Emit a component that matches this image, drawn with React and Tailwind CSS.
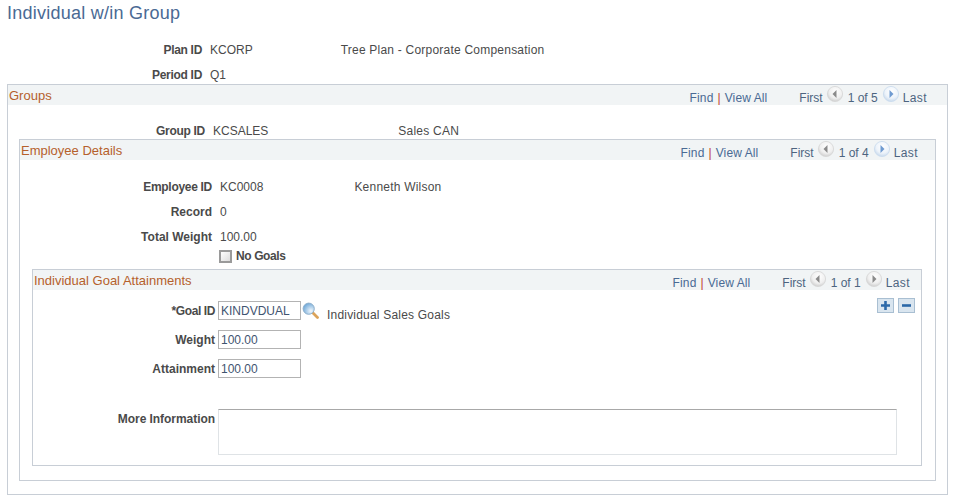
import React from "react";

function Arrow({ dir, active, uid }) {
  const id = `${uid}${dir}`;
  const fill = active ? "#6f9bd1" : "#8a8a8a";
  return (
    <svg width="18" height="18" viewBox="0 0 18 18" className="block shrink-0">
      <defs>
        <radialGradient id={id} cx="55%" cy="35%" r="65%">
          <stop offset="0%" stopColor="#ffffff" />
          <stop offset="65%" stopColor={active ? "#edf3fa" : "#efefef"} />
          <stop offset="100%" stopColor={active ? "#c8d9ec" : "#cfcfcf"} />
        </radialGradient>
      </defs>
      <circle cx="9" cy="9" r="7.6" fill={`url(#${id})`} stroke={active ? "#c9dbee" : "#d6d6d6"} strokeWidth="0.8" />
      {dir === "l" ? (
        <path d="M6.5 9 L10.5 5 V13 Z" fill={fill} />
      ) : (
        <path d="M11.5 9 L7.5 5 V13 Z" fill={fill} />
      )}
    </svg>
  );
}

function Header({ title, count, nextActive, pr, uid }) {
  return (
    <div className="flex h-5 items-center bg-[#f1f4f5] pl-[1px]">
      <span className="text-[13px] leading-none text-[#b5602c]">{title}</span>
      <div className={`ml-auto mt-[6px] flex items-center text-[12px] ${pr}`}>
        <span className="tracking-[0.2px] text-[#4a6a94]">Find</span>
        <span className="mx-[4px] text-[#c0392b]">|</span>
        <span className="tracking-[0.1px] text-[#4a6a94]">View All</span>
        <span className="ml-[32px] text-[#4d6480]">First</span>
        <span className="ml-[3px] -mt-[9px]"><Arrow uid={uid} dir="l" /></span>
        <span className="ml-[4px] text-[#4d6480]">{count}</span>
        <span className="ml-[4px] -mt-[9px]"><Arrow uid={uid} dir="r" active={nextActive} /></span>
        <span className="ml-[3px] tracking-[0.4px] text-[#4d6480]">Last</span>
      </div>
    </div>
  );
}

function Row({ label, value, w, note, noteClass, tight, className = "" }) {
  return (
    <div className={`flex h-[14px] items-center ${className}`}>
      <span className={`${w} text-right font-bold text-[#4a4a4a] ${tight ? "tracking-[-0.3px]" : ""}`}>{label}</span>
      <span className="ml-[8px] text-[#4a4a4a]">{value}</span>
      {note && <span className={`tracking-[0.22px] text-[#4a4a4a] ${noteClass}`}>{note}</span>}
    </div>
  );
}

function Field({ label, value, tight, className = "", children }) {
  return (
    <div className={`flex h-[19px] items-center ${className}`}>
      <span className={`w-[182px] text-right font-bold text-[#4a4a4a] ${tight ? "tracking-[-0.4px]" : ""}`}>{label}</span>
      <div className="ml-[3px] flex h-[19px] w-[83px] items-center border border-[#b3b3b3] bg-white pl-[2px] text-[#3f5470]">
        {value}
      </div>
      {children}
    </div>
  );
}

function Magnifier() {
  return (
    <svg width="17" height="17" viewBox="0 0 17 17" className="ml-[1px] block shrink-0">
      <defs>
        <radialGradient id="lens" cx="70%" cy="70%" r="75%">
          <stop offset="0%" stopColor="#f2f8fd" />
          <stop offset="100%" stopColor="#6fa8d8" />
        </radialGradient>
      </defs>
      <path d="M11 11 L15.5 15.5" stroke="#dba35a" strokeWidth="2.8" strokeLinecap="round" />
      <circle cx="6.7" cy="6.7" r="5.6" fill="url(#lens)" stroke="#8fb0cc" strokeWidth="1" />
    </svg>
  );
}

function SquareBtn({ children }) {
  return (
    <span className="flex h-[15px] w-[17px] items-center justify-center border border-[#a9bfd2] bg-[#d9e5ef]">
      {children}
    </span>
  );
}

export default function App() {
  return (
    <div
      className="h-[499px] w-[954px] overflow-hidden bg-white text-[12px] leading-[14px]"
      style={{ fontFamily: '"Liberation Sans", Arial, sans-serif' }}
    >
      <h1 className="ml-[7px] mt-[2px] h-[22px] text-[18px] leading-[22px] tracking-[0.25px] text-[#4a6a94]">Individual w/in Group</h1>

      <Row className="mt-[19px]" w="w-[202px]" tight label="Plan ID" value="KCORP" note="Tree Plan - Corporate Compensation" noteClass="ml-[88px]" />
      <Row className="mt-[11px]" w="w-[202px]" tight label="Period ID" value="Q1" />

      <div className="ml-[7px] mt-[2px] h-[411px] w-[941px] border border-[#c8ced6]">
        <Header uid="a" title="Groups" count="1 of 5" nextActive pr="pr-[20px]" />
        <Row className="mt-[19px]" w="w-[197px]" tight label="Group ID" value="KCSALES" note="Sales CAN" noteClass="ml-[130px]" />

        <div className="ml-[11px] mt-[1px] h-[342px] w-[917px] border border-[#c8ced6]">
          <Header uid="b" title="Employee Details" count="1 of 4" nextActive pr="pr-[17px]" />
          <Row className="mt-[20px]" w="w-[192px]" tight label="Employee ID" value="KC0008" note="Kenneth Wilson" noteClass="ml-[91px]" />
          <Row className="mt-[11px]" w="w-[192px]" label="Record" value="0" />
          <Row className="mt-[11px]" w="w-[192px]" label="Total Weight" value="100.00" />
          <div className="ml-[199px] mt-[5px] flex h-[14px] items-center">
            <span className="h-[13px] w-[13px] border-2 border-[#9a9a9a] bg-gradient-to-br from-[#ffffff] to-[#dcdcdc]" />
            <span className="ml-[4px] font-bold tracking-[-0.4px] text-[#4a4a4a]">No Goals</span>
          </div>

          <div className="ml-[12px] mt-[6px] h-[197px] w-[890px] border border-[#c8ced6]">
            <Header uid="c" title="Individual Goal Attainments" count="1 of 1" pr="pr-[11px]" />
            <div className="relative pt-[11px]">
              <div className="absolute right-[6px] top-[8px] flex gap-[4px]">
                <SquareBtn>
                  <svg width="9" height="9" viewBox="0 0 9 9"><path d="M3.2 0H5.8V3.2H9V5.8H5.8V9H3.2V5.8H0V3.2H3.2Z" fill="#2b68a8" /></svg>
                </SquareBtn>
                <SquareBtn>
                  <svg width="9" height="9" viewBox="0 0 9 9"><path d="M0 3.2H9V5.8H0Z" fill="#2b68a8" /></svg>
                </SquareBtn>
              </div>
              <Field tight label="*Goal ID" value="KINDVDUAL">
                <Magnifier />
                <span className="ml-[8px] mt-[9px] whitespace-nowrap tracking-[0.2px] text-[#4a4a4a]">Individual Sales Goals</span>
              </Field>
              <Field className="mt-[10px]" label="Weight" value="100.00" />
              <Field className="mt-[10px]" label="Attainment" value="100.00" />
              <div className="mt-[31px] flex items-start">
                <span className="w-[182px] pt-[3px] text-right font-bold tracking-[-0.05px] text-[#4a4a4a]">More Information</span>
                <div className="ml-[3px] h-[46px] w-[679px] border border-[#dfe3e6] border-t-[#a8a8a8]" />
              </div>
            </div>
          </div>
        </div>
      </div>
    </div>
  );
}
